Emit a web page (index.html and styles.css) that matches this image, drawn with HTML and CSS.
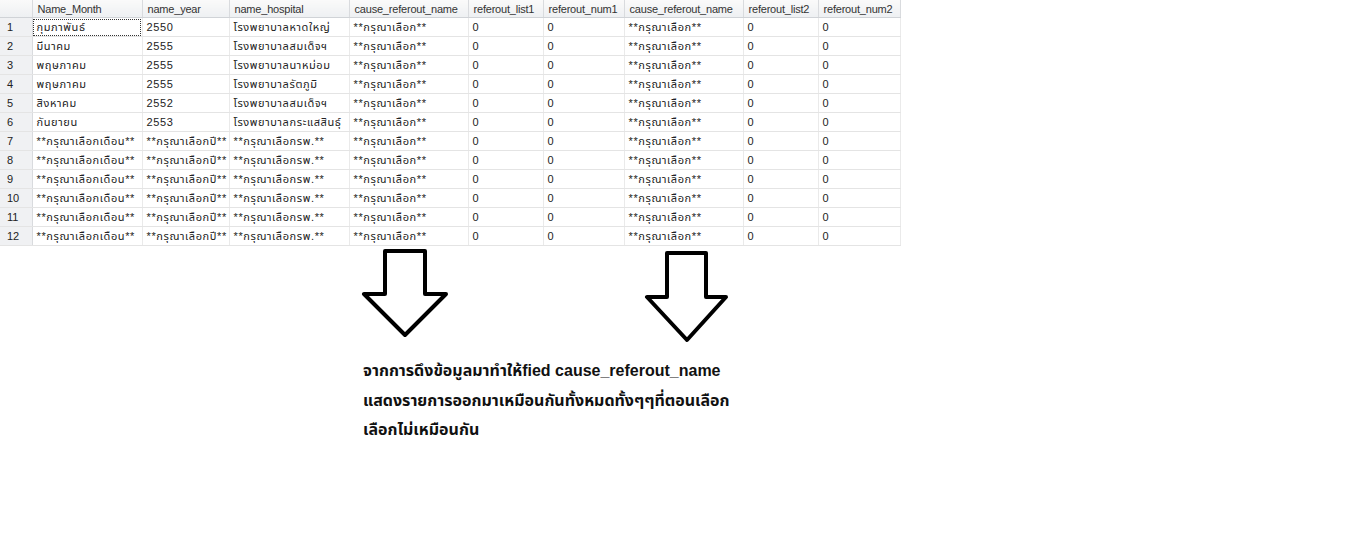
FILE: index.html
```html
<!DOCTYPE html>
<html lang="th">
<head>
<meta charset="utf-8">
<title>Results</title>
<link rel="stylesheet" href="styles.css">
</head>
<body>
<table class="grid">
  <colgroup>
    <col class="c-rn"><col class="c-month"><col class="c-year"><col class="c-hosp"><col class="c-cause"><col class="c-list"><col class="c-num1"><col class="c-cause"><col class="c-list"><col class="c-num2">
  </colgroup>
  <thead>
    <tr><th></th><th>Name_Month</th><th>name_year</th><th>name_hospital</th><th>cause_referout_name</th><th>referout_list1</th><th>referout_num1</th><th>cause_referout_name</th><th>referout_list2</th><th>referout_num2</th></tr>
  </thead>
  <tbody>
    <tr><td class="rn">1</td><td class="focus">กุมภาพันธ์</td><td>2550</td><td>โรงพยาบาลหาดใหญ่</td><td>**กรุณาเลือก**</td><td>0</td><td>0</td><td>**กรุณาเลือก**</td><td>0</td><td>0</td></tr>
    <tr><td class="rn">2</td><td>มีนาคม</td><td>2555</td><td>โรงพยาบาลสมเด็จฯ</td><td>**กรุณาเลือก**</td><td>0</td><td>0</td><td>**กรุณาเลือก**</td><td>0</td><td>0</td></tr>
    <tr><td class="rn">3</td><td>พฤษภาคม</td><td>2555</td><td>โรงพยาบาลนาหม่อม</td><td>**กรุณาเลือก**</td><td>0</td><td>0</td><td>**กรุณาเลือก**</td><td>0</td><td>0</td></tr>
    <tr><td class="rn">4</td><td>พฤษภาคม</td><td>2555</td><td>โรงพยาบาลรัตภูมิ</td><td>**กรุณาเลือก**</td><td>0</td><td>0</td><td>**กรุณาเลือก**</td><td>0</td><td>0</td></tr>
    <tr><td class="rn">5</td><td>สิงหาคม</td><td>2552</td><td>โรงพยาบาลสมเด็จฯ</td><td>**กรุณาเลือก**</td><td>0</td><td>0</td><td>**กรุณาเลือก**</td><td>0</td><td>0</td></tr>
    <tr><td class="rn">6</td><td>กันยายน</td><td>2553</td><td>โรงพยาบาลกระแสสินธุ์</td><td>**กรุณาเลือก**</td><td>0</td><td>0</td><td>**กรุณาเลือก**</td><td>0</td><td>0</td></tr>
    <tr><td class="rn">7</td><td>**กรุณาเลือกเดือน**</td><td>**กรุณาเลือกปี**</td><td>**กรุณาเลือกรพ.**</td><td>**กรุณาเลือก**</td><td>0</td><td>0</td><td>**กรุณาเลือก**</td><td>0</td><td>0</td></tr>
    <tr><td class="rn">8</td><td>**กรุณาเลือกเดือน**</td><td>**กรุณาเลือกปี**</td><td>**กรุณาเลือกรพ.**</td><td>**กรุณาเลือก**</td><td>0</td><td>0</td><td>**กรุณาเลือก**</td><td>0</td><td>0</td></tr>
    <tr><td class="rn">9</td><td>**กรุณาเลือกเดือน**</td><td>**กรุณาเลือกปี**</td><td>**กรุณาเลือกรพ.**</td><td>**กรุณาเลือก**</td><td>0</td><td>0</td><td>**กรุณาเลือก**</td><td>0</td><td>0</td></tr>
    <tr><td class="rn">10</td><td>**กรุณาเลือกเดือน**</td><td>**กรุณาเลือกปี**</td><td>**กรุณาเลือกรพ.**</td><td>**กรุณาเลือก**</td><td>0</td><td>0</td><td>**กรุณาเลือก**</td><td>0</td><td>0</td></tr>
    <tr><td class="rn">11</td><td>**กรุณาเลือกเดือน**</td><td>**กรุณาเลือกปี**</td><td>**กรุณาเลือกรพ.**</td><td>**กรุณาเลือก**</td><td>0</td><td>0</td><td>**กรุณาเลือก**</td><td>0</td><td>0</td></tr>
    <tr><td class="rn">12</td><td>**กรุณาเลือกเดือน**</td><td>**กรุณาเลือกปี**</td><td>**กรุณาเลือกรพ.**</td><td>**กรุณาเลือก**</td><td>0</td><td>0</td><td>**กรุณาเลือก**</td><td>0</td><td>0</td></tr>
  </tbody>
</table>

<div class="arrows">
  <svg class="arrow-svg" width="900" height="100" viewBox="0 246 900 100">
    <polygon points="385,251 425,251 425,294 446,294 405,335 364,294 385,294" fill="#fff" stroke="#000" stroke-width="4" stroke-linejoin="round"/>
    <polygon points="667,253 706,253 706,297 726,297 687,340 647,297 667,297" fill="#fff" stroke="#000" stroke-width="4" stroke-linejoin="round"/>
  </svg>
</div>

<div class="note">
  <p>จากการดึงข้อมูลมาทำให้fied cause_referout_name</p>
  <p>แสดงรายการออกมาเหมือนกันทั้งหมดทั้งๆๆที่ตอนเลือก</p>
  <p>เลือกไม่เหมือนกัน</p>
</div>
</body>
</html>
```

FILE: styles.css
```css
html, body {
  margin: 0;
  padding: 0;
  background: #ffffff;
}

body {
  width: 1347px;
  height: 556px;
  overflow: hidden;
  font-family: "Liberation Sans", "Noto Sans Thai", "Noto Sans", "DejaVu Sans", sans-serif;
}

.grid {
  border-collapse: collapse;
  table-layout: fixed;
  width: 900px;
  font-size: 11px;
  color: #222;
}

.c-rn { width: 32px; }
.c-month { width: 110px; }
.c-year { width: 87px; }
.c-hosp { width: 120px; }
.c-cause { width: 119px; }
.c-list { width: 75px; }
.c-num1 { width: 81px; }
.c-num2 { width: 82px; }

.grid th {
  height: 17px;
  padding: 0 0 0 5px;
  text-align: left;
  font-weight: normal;
  color: #333;
  letter-spacing: -0.2px;
  background: linear-gradient(#fafafa, #eef0f2);
  border-right: 1px solid #d9dbde;
  border-bottom: 1px solid #d0d3d7;
  white-space: nowrap;
  overflow: hidden;
}

.grid td {
  height: 18px;
  padding: 0 0 0 4px;
  letter-spacing: 0.6px;
  border-right: 1px solid #eaeaea;
  border-bottom: 1px solid #e4e4e4;
  white-space: nowrap;
  overflow: hidden;
}

.grid td.rn {
  padding-left: 7px;
  letter-spacing: 0;
  background: #f0f1f3;
  border-right: 1px solid #d9dbde;
  color: #222;
}

.grid td.focus {
  outline: 1px dotted #333;
  outline-offset: -2px;
}

.arrows {
  height: 100px;
}

.arrow-svg {
  display: block;
}

.note {
  padding-top: 10px;
  padding-left: 363px;
  font-family: "Liberation Sans", "Noto Sans Thai", "Noto Sans", sans-serif;
  font-weight: bold;
  font-size: 16px;
  color: #111;
}

.note p {
  margin: 0;
  height: 29.5px;
  line-height: 29.5px;
}
```
